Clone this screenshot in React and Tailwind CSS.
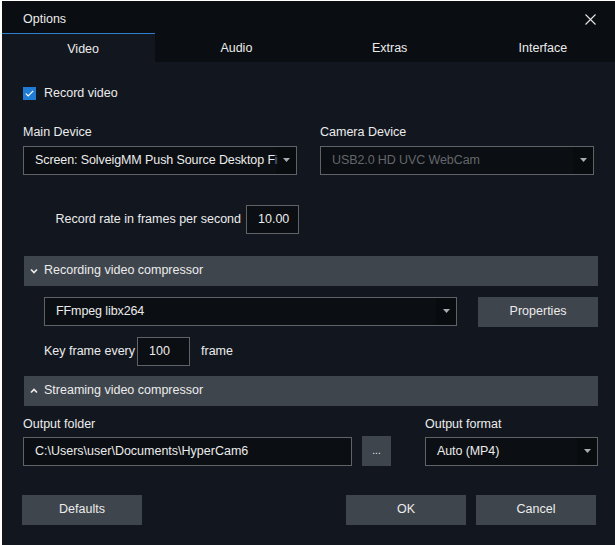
import React from 'react'

const Arrow = () => (
  <svg width="7" height="4" viewBox="0 0 7 4" className="shrink-0">
    <path d="M0 0h7L3.5 4z" fill="#a9adb2" />
  </svg>
)

// dropdown: the arrow box lies over the right end of the text
const Select = ({ value, className = '', disabled }) => (
  <div
    className={`relative flex h-[29px] items-center border border-[#5f6368] bg-[#0b0e12] ${className}`}
  >
    <div
      className={`flex-1 overflow-hidden whitespace-nowrap pl-[11px] pr-[12px] tracking-[-0.1px] ${
        disabled ? 'text-[#63676c]' : 'text-[#ececec]'
      }`}
    >
      {value}
    </div>
    <div className="absolute inset-y-0 right-0 flex w-[20px] items-center justify-center bg-[#090b0e]/70">
      <Arrow />
    </div>
  </div>
)

const Input = ({ value, className = '' }) => (
  <div
    className={`flex h-[29px] items-center border border-[#5f6368] bg-[#0b0e12] pl-[11px] text-[#ececec] ${className}`}
  >
    {value}
  </div>
)

const Button = ({ children, className = '' }) => (
  <div
    className={`flex h-[30px] items-center justify-center bg-[#3f454d] text-[#ececec] ${className}`}
  >
    {children}
  </div>
)

const Section = ({ title, open }) => (
  <div className="flex h-[30px] items-center bg-[#3f454d] pl-[6px] text-[#ececec]">
    <svg width="8" height="6" viewBox="0 0 8 6" className="mr-[6px]">
      {open ? (
        <path d="M1 1.5l3 3 3-3" stroke="#ececec" strokeWidth="1.7" fill="none" />
      ) : (
        <path d="M1 4.5l3-3 3 3" stroke="#ececec" strokeWidth="1.7" fill="none" />
      )}
    </svg>
    {title}
  </div>
)

export default function App() {
  const tabs = ['Video', 'Audio', 'Extras', 'Interface']

  return (
    <div
      className="h-[545px] w-[615px] overflow-hidden border-l-[2px] border-t border-white bg-[#12171f] text-[12.5px] text-[#ececec]"
      style={{ fontFamily: '"Liberation Sans", Arial, sans-serif' }}
    >
      {/* Title bar */}
      <div className="flex h-[32px] items-center justify-between bg-[#0a0d11] pl-[21px] pr-[19px] pt-[4px]">
        <span>Options</span>
        <svg width="11" height="11" viewBox="0 0 11 11">
          <path d="M0.5 0.5l10 10M10.5 0.5l-10 10" stroke="#e6e6e6" strokeWidth="1.1" />
        </svg>
      </div>

      {/* Tabs */}
      <div className="grid h-[29px] grid-cols-4 bg-[#0a0d11]">
        {tabs.map((t, i) => (
          <div
            key={t}
            className={`flex items-center justify-center pl-[9px] pt-[2px] ${
              i === 0 ? 'border-t border-[#2f7fd0] bg-[#12171f]' : ''
            }`}
          >
            {t}
          </div>
        ))}
      </div>

      {/* Body */}
      <div className="pl-[21px] pr-[17px]">
        <div className="mt-[22px] flex items-center">
          <div className="flex h-[13px] w-[13px] items-center justify-center bg-[#1f7bd3]">
            <svg width="9" height="7" viewBox="0 0 9 7">
              <path d="M0.8 3.6l2.4 2.3L8.2 0.8" stroke="#ffffff" strokeWidth="1.2" fill="none" />
            </svg>
          </div>
          <span className="ml-[8px]">Record video</span>
        </div>

        <div className="mt-[22px] grid grid-cols-[274px_274px] gap-[23px]">
          <div>
            <div className="mb-[7px] leading-[14px]">Main Device</div>
            <Select value="Screen: SolveigMM Push Source Desktop Fi" />
          </div>
          <div>
            <div className="mb-[7px] leading-[14px]">Camera Device</div>
            <Select value="USB2.0 HD UVC WebCam" disabled />
          </div>
        </div>

        <div className="mt-[30px] flex w-[276px] items-center justify-end">
          <span className="mr-[5px]">Record rate in frames per second</span>
          <Input value="10.00" className="w-[53px]" />
        </div>

        <div className="mt-[22px] pl-[1px]">
          <Section title="Recording video compressor" open />
        </div>

        <div className="mt-[11px] flex pl-[21px]">
          <Select value="FFmpeg libx264" className="w-[414px]" />
          <Button className="ml-[21px] w-[120px]">Properties</Button>
        </div>

        <div className="mt-[10px] flex items-center pl-[21px]">
          <span className="w-[93px]">Key frame every</span>
          <Input value="100" className="w-[53px]" />
          <span className="ml-[11px]">frame</span>
        </div>

        <div className="mt-[10px] pl-[1px]">
          <Section title="Streaming video compressor" />
        </div>

        <div className="mt-[11px] flex items-end">
          <div>
            <div className="mb-[6px] leading-[14px]">Output folder</div>
            <Input value="C:\Users\user\Documents\HyperCam6" className="w-[329px]" />
          </div>
          <Button className="ml-[10px] h-[29px] w-[29px] text-[10px] text-[#bfc3c7]">...</Button>
          <div className="ml-[34px]">
            <div className="mb-[6px] leading-[14px]">Output format</div>
            <Select value="Auto (MP4)" className="w-[173px]" />
          </div>
        </div>

        <div className="mt-[29px] flex">
          <Button className="-ml-[1px] w-[120px]">Defaults</Button>
          <Button className="ml-auto w-[120px]">OK</Button>
          <Button className="ml-[10px] mr-[2px] w-[120px]">Cancel</Button>
        </div>
      </div>
    </div>
  )
}
